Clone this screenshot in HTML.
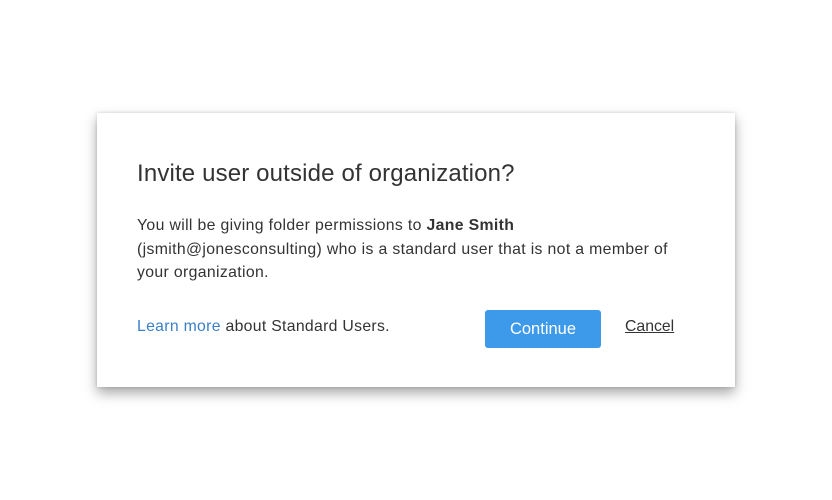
<!DOCTYPE html>
<html><head><style>
html,body{margin:0;padding:0;width:832px;height:500px;background:#fff;overflow:hidden;font-family:"Liberation Sans",sans-serif;}
.dlg{position:absolute;left:97px;top:113px;width:638px;height:274px;background:#fff;box-shadow:0 6px 12px rgba(0,0,0,0.35),0 0 3px rgba(0,0,0,0.15);}
.t{position:absolute;left:40px;top:47px;font-size:24px;letter-spacing:0.15px;color:#333;white-space:nowrap;}
.b{position:absolute;left:40px;top:101px;width:590px;font-size:15.8px;letter-spacing:0.35px;line-height:23.5px;color:#333;white-space:nowrap;}
.l{position:absolute;left:40px;top:205px;font-size:15.8px;letter-spacing:0.3px;color:#333;}
.l a{color:#3a7fc8;text-decoration:none;}
.btn{position:absolute;left:388px;top:197px;width:116px;height:38px;background:#3d99ea;border-radius:3px;color:#fff;font-size:16.5px;text-align:center;line-height:38px;}
.c{position:absolute;left:528px;top:205px;font-size:15.8px;color:#333;text-decoration:underline;}
</style></head><body>
<div class="dlg">
<div class="t">Invite user outside of organization?</div>
<div class="b">You will be giving folder permissions to <b>Jane Smith</b><br>(jsmith@jonesconsulting) who is a standard user that is not a member of<br>your organization.</div>
<div class="l"><a>Learn more</a> about Standard Users.</div>
<div class="btn">Continue</div>
<div class="c">Cancel</div>
</div>
</body></html>
